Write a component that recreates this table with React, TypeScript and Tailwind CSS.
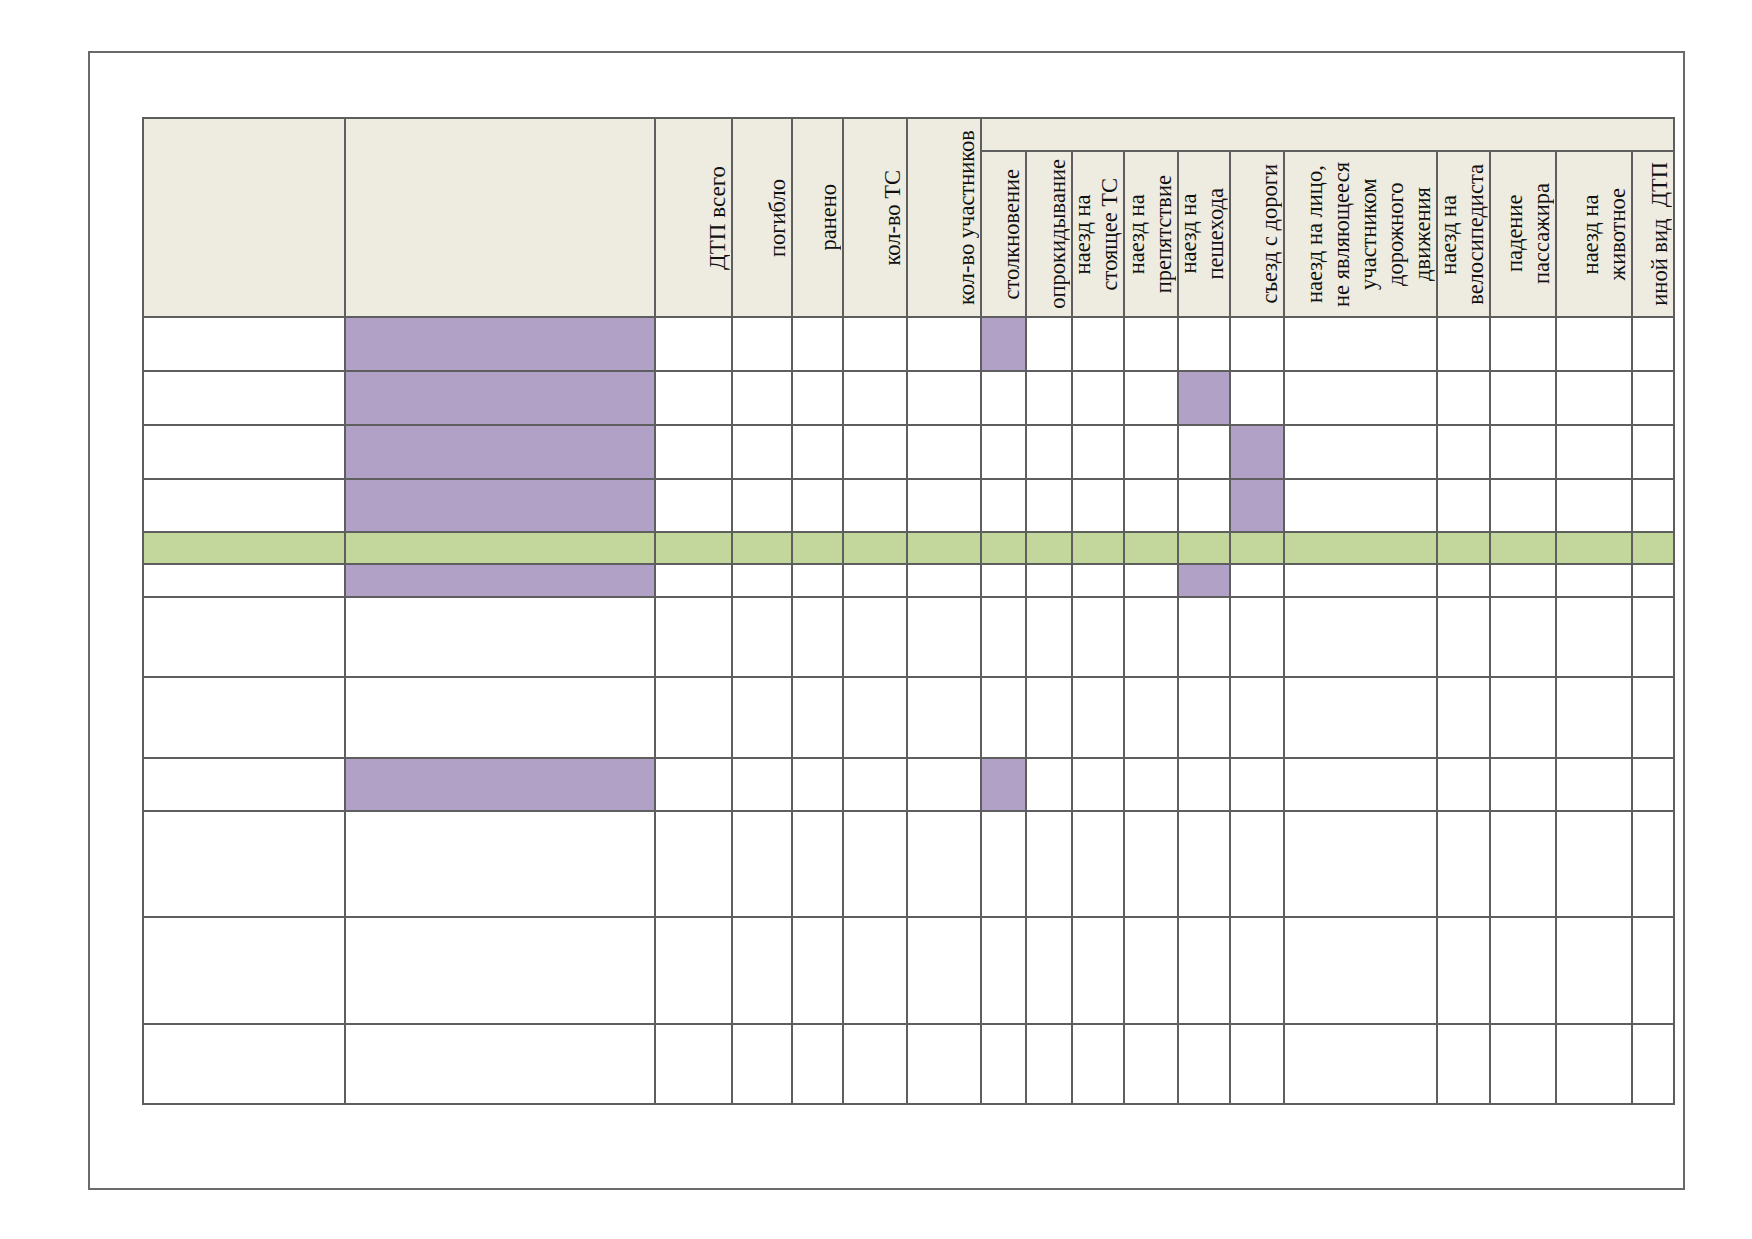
const line = 'border-[#5e5e5e]';

type Head = { text: string[]; big?: boolean };

const leftHeads: Head[] = [
  { text: [] },
  { text: [] },
  { text: ['ДТП всего'], big: true },
  { text: ['погибло'] },
  { text: ['ранено'] },
  { text: ['кол-во ТС'] },
  { text: ['кол-во участников'] },
];

const typeHeads: Head[] = [
  { text: ['столкновение'] },
  { text: ['опрокидывание'] },
  { text: ['наезд на', 'стоящее ТС'] },
  { text: ['наезд на', 'препятствие'] },
  { text: ['наезд на', 'пешехода'] },
  { text: ['съезд с дороги'] },
  { text: ['наезд на лицо,', 'не являющееся', 'участником', 'дорожного', 'движения'] },
  { text: ['наезд на', 'велосипедиста'] },
  { text: ['падение', 'пассажира'] },
  { text: ['наезд на', 'животное'] },
  { text: ['иной вид\u00a0\u00a0ДТП'] },
];

interface Row {
  h: string;
  green?: boolean;
  purple?: number[];
}

// body rows, purple = index of the highlighted columns
const rows: Row[] = [
  { h: 'h-[54px]', purple: [1, 7] },
  { h: 'h-[54px]', purple: [1, 11] },
  { h: 'h-[54px]', purple: [1, 12] },
  { h: 'h-[53px]', purple: [1, 12] },
  { h: 'h-[32px]', green: true },
  { h: 'h-[33px]', purple: [1, 11] },
  { h: 'h-[80px]' },
  { h: 'h-[81px]' },
  { h: 'h-[53px]', purple: [1, 7] },
  { h: 'h-[106px]' },
  { h: 'h-[107px]' },
  { h: 'h-[80px]' },
];

function Rotated({ head }: { head: Head }) {
  if (!head.text.length) return null;
  return (
    <span
      className={`block rotate-180 text-center text-[#111] [writing-mode:vertical-rl] ${
        head.big ? 'text-[23px] leading-[27px]' : 'text-[22.5px] leading-[27px]'
      }`}
    >
      {head.text.map((t, i) => (
        <span key={i}>
          {i > 0 && <br />}
          {t}
        </span>
      ))}
    </span>
  );
}

export default function App() {
  return (
    <div className="min-h-[1239px] bg-white pt-[51px] pl-[88px] font-['Liberation_Serif',serif]">
      <div className="h-[1139px] w-[1597px] border-2 border-[#6a6a6a] pt-[64px] pl-[52px]">
        <div
          className={`grid w-max grid-cols-[202px_310px_77px_60px_51px_64px_74px_45px_46px_52px_54px_52px_54px_153px_53px_66px_76px_42px] border-t-2 border-l-2 ${line}`}
        >
          {leftHeads.map((head, i) => (
            <div
              key={i}
              className={`row-span-2 flex items-center justify-end border-r-2 border-b-2 bg-[#eeece1] ${line}`}
            >
              <Rotated head={head} />
            </div>
          ))}
          <div className={`col-span-11 h-[33px] border-r-2 border-b-2 bg-[#eeece1] ${line}`} />
          {typeHeads.map((head, i) => (
            <div
              key={i}
              className={`flex h-[166px] items-center justify-end border-r-2 border-b-2 bg-[#eeece1] ${line}`}
            >
              <Rotated head={head} />
            </div>
          ))}

          {rows.map((row, r) =>
            Array.from({ length: 18 }, (_, c) => (
              <div
                key={`${r}-${c}`}
                className={`${row.h} border-r-2 border-b-2 ${line} ${
                  row.green
                    ? 'bg-[#c3d69b]'
                    : row.purple?.includes(c)
                      ? 'bg-[#b2a1c7]'
                      : 'bg-white'
                }`}
              />
            )),
          )}
        </div>
      </div>
    </div>
  );
}
